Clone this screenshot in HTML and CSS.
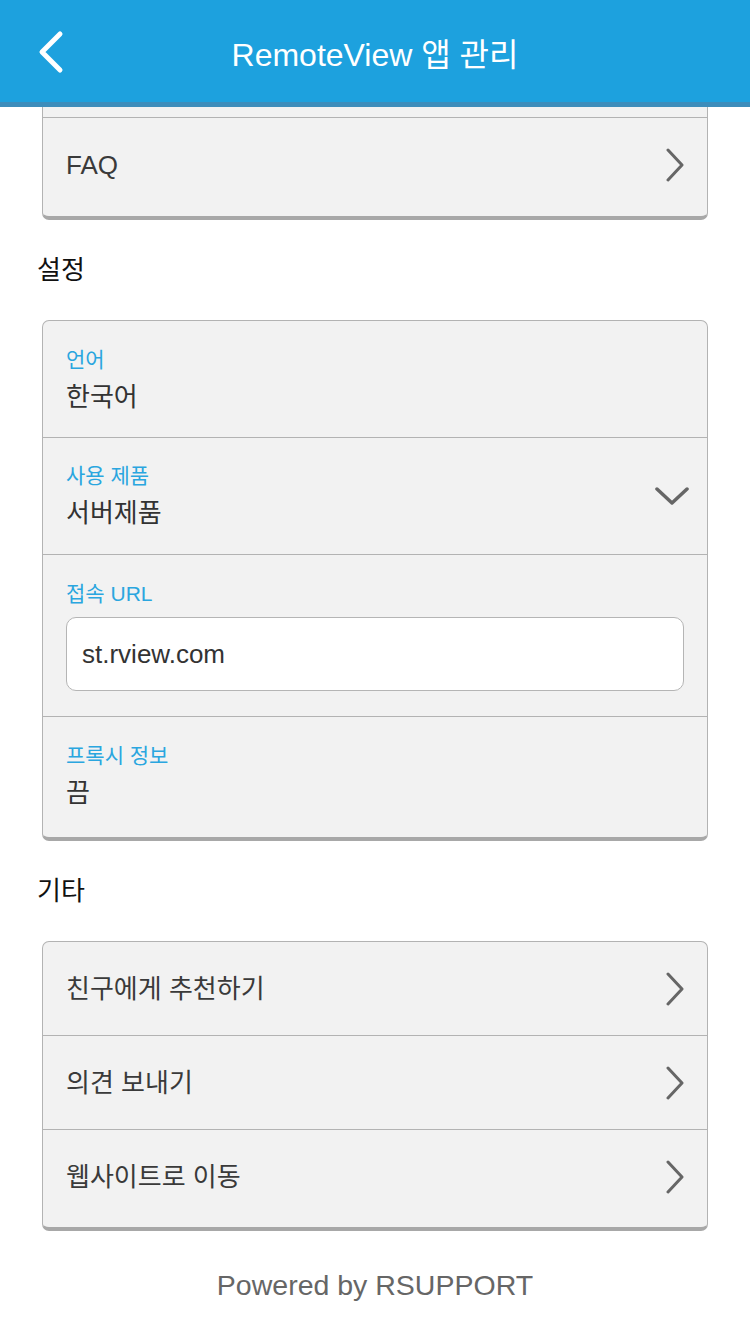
FILE: index.html
```html
<!DOCTYPE html>
<html lang="ko">
<head>
<meta charset="utf-8">
<title>RemoteView 앱 관리</title>
<link rel="stylesheet" href="styles.css">
</head>
<body>
<header class="appbar">
  <svg class="back" width="30" height="44" viewBox="0 0 30 44"><path d="M24 4 L6 22 L24 40" fill="none" stroke="#fff" stroke-width="5" stroke-linecap="round" stroke-linejoin="round"/></svg>
  <h1 class="title">RemoteView 앱 관리</h1>
</header>
<main class="content">
  <section class="card card-top">
    <div class="stub"></div>
    <div class="row link faq"><span class="text">FAQ</span><svg class="chev" width="20" height="34" viewBox="0 0 20 34"><path d="M3 2 L17 17 L3 32" fill="none" stroke="#666" stroke-width="3" stroke-linecap="round" stroke-linejoin="round"/></svg></div>
  </section>

  <h2 class="heading">설정</h2>
  <section class="card">
    <div class="row field first"><div class="label">언어</div><div class="value">한국어</div></div>
    <div class="row field select"><div class="fieldtext"><div class="label">사용 제품</div><div class="value">서버제품</div></div><svg class="down" width="34" height="20" viewBox="0 0 34 20"><path d="M2 3 L17 17 L32 3" fill="none" stroke="#666" stroke-width="3.5" stroke-linecap="round" stroke-linejoin="round"/></svg></div>
    <div class="row field urlrow"><div class="label">접속 URL</div><div class="input">st.rview.com</div></div>
    <div class="row field lastfield"><div class="label">프록시 정보</div><div class="value">끔</div></div>
  </section>

  <h2 class="heading">기타</h2>
  <section class="card">
    <div class="row link short"><span class="text">친구에게 추천하기</span><svg class="chev" width="20" height="34" viewBox="0 0 20 34"><path d="M3 2 L17 17 L3 32" fill="none" stroke="#666" stroke-width="3" stroke-linecap="round" stroke-linejoin="round"/></svg></div>
    <div class="row link short"><span class="text">의견 보내기</span><svg class="chev" width="20" height="34" viewBox="0 0 20 34"><path d="M3 2 L17 17 L3 32" fill="none" stroke="#666" stroke-width="3" stroke-linecap="round" stroke-linejoin="round"/></svg></div>
    <div class="row link last"><span class="text">웹사이트로 이동</span><svg class="chev" width="20" height="34" viewBox="0 0 20 34"><path d="M3 2 L17 17 L3 32" fill="none" stroke="#666" stroke-width="3" stroke-linecap="round" stroke-linejoin="round"/></svg></div>
  </section>

  <footer class="powered">Powered by RSUPPORT</footer>
</main>
</body>
</html>
```

FILE: styles.css
```css
* { box-sizing: border-box; }
html, body { margin: 0; padding: 0; background: #fff; }
body {
  width: 750px;
  font-family: "Liberation Sans", "Noto Sans CJK KR", sans-serif;
  color: #333;
}
.appbar {
  height: 107px;
  background: #1da1de;
  border-bottom: 5px solid #3d8dbb;
  display: flex;
  align-items: center;
  justify-content: center;
  position: relative;
}
.back {
  position: absolute;
  left: 36px;
  top: 30px;
}
.title {
  margin: 0;
  color: #fff;
  font-weight: normal;
  font-size: 32px;
  line-height: 40px;
  padding-top: 8px;
}
.content {
  padding: 0 42px;
}
.card {
  background: #f2f2f2;
  border: 1px solid #b3b3b3;
  border-bottom: 4px solid #a8a8a8;
  border-radius: 7px;
}
.card-top {
  border-top: none;
  border-radius: 0 0 7px 7px;
}
.stub { height: 10px; }
.row {
  border-top: 1px solid #b3b3b3;
  padding-left: 23px;
}
.card > .row:first-child { border-top: none; }
.link {
  display: flex;
  align-items: center;
  justify-content: space-between;
  padding-right: 22px;
}
.faq { height: 99px; padding-bottom: 4px; }
.short { height: 94px; }
.card > .row.short:first-child { height: 93px; }
.last { height: 98px; padding-bottom: 4px; }
.text {
  font-size: 26px;
  line-height: 36px;
  color: #3a3a3a;
}
.chev { display: block; }
.heading {
  margin: 0 0 0 -5px;
  padding: 30px 0;
  font-size: 26px;
  line-height: 40px;
  font-weight: normal;
  color: #111;
}
.field {
  height: 117px;
  padding-top: 24px;
}
.card > .row.first { height: 116px; }
.label {
  font-size: 21px;
  line-height: 30px;
  color: #2aa6df;
}
.value {
  margin-top: 4px;
  font-size: 26px;
  line-height: 36px;
  color: #333;
}
.select {
  display: flex;
  align-items: center;
  justify-content: space-between;
  padding-top: 0;
  padding-right: 18px;
}
.urlrow {
  height: 162px;
  padding-top: 24px;
  padding-right: 23px;
}
.input {
  margin-top: 8px;
  height: 74px;
  background: #fff;
  border: 1px solid #b5b5b5;
  border-radius: 10px;
  padding-left: 15px;
  font-size: 26px;
  line-height: 72px;
  color: #333;
}
.lastfield { height: 121px; padding-top: 24px; }
.powered {
  text-align: center;
  font-size: 28.5px;
  line-height: 40px;
  color: #666;
  padding-top: 34px;
}
```
